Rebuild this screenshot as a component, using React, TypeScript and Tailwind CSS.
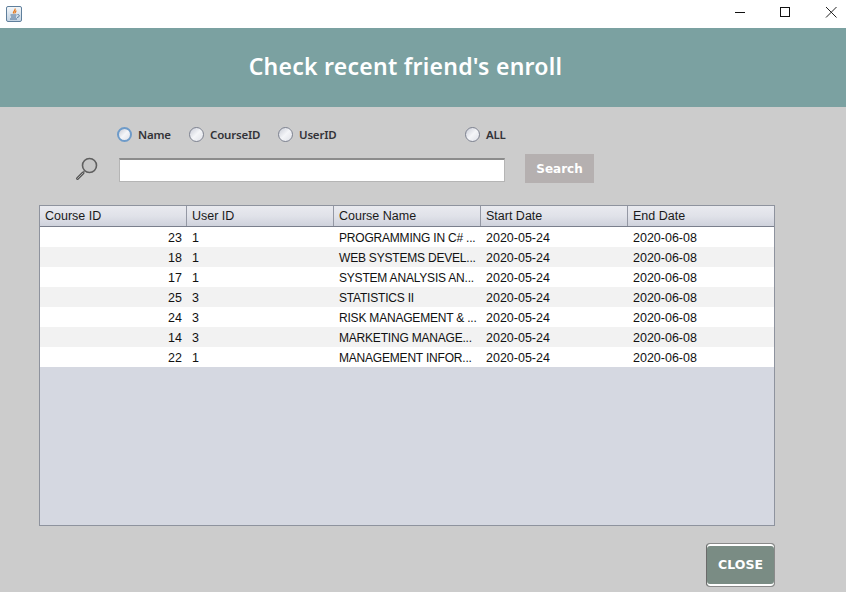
const rows = [
  ["23", "1", "PROGRAMMING IN C# ..."],
  ["18", "1", "WEB SYSTEMS DEVEL..."],
  ["17", "1", "SYSTEM ANALYSIS AN..."],
  ["25", "3", "STATISTICS II"],
  ["24", "3", "RISK MANAGEMENT & ..."],
  ["14", "3", "MARKETING MANAGE..."],
  ["22", "1", "MANAGEMENT INFOR..."],
];
const headers = ["Course ID", "User ID", "Course Name", "Start Date", "End Date"];

function JavaIcon() {
  return (
    <div className="w-[16px] h-[16px] rounded-[2px] border border-[#5f7f9c] bg-gradient-to-b from-[#f4f7fa] to-[#c3d3e2] flex items-center justify-center">
      <svg width="13" height="13" viewBox="0 0 13 13" fill="none">
        <path d="M7 0.5C8 2.5 4.5 3.5 5.5 5.5M8 2.5C8 4 6.7 4.5 7 5.5" stroke="#e8791c" strokeWidth="1.2" />
        <path d="M2.5 7H8.5M3 9H8M2 11H9" stroke="#4c6f94" strokeWidth="1" />
        <path d="M9.5 6.5C12 6.5 12 9 9 9.5" stroke="#4c6f94" strokeWidth="0.9" />
      </svg>
    </div>
  );
}

function Radio({ label, focused, width }: { label: string; focused?: boolean; width: string }) {
  return (
    <div className={`flex items-center gap-[6px] ${width}`}>
      <div className={`w-[15px] h-[15px] rounded-full shrink-0 bg-gradient-to-br from-[#c9ccd6] via-[#f4f5f8] to-[#dfe1e8] ${focused ? "border-2 border-[#6e9bc9]" : "border border-[#7d8290]"}`} />
      <span className="text-[11.5px] font-semibold tracking-[-0.2px] text-[#333338] font-['Noto_Sans','DejaVu_Sans',sans-serif] leading-none">{label}</span>
    </div>
  );
}

export default function App() {
  return (
    <div className="w-[846px] h-[592px] bg-[#cccccc] flex flex-col overflow-hidden font-['Liberation_Sans',Arial,sans-serif]">
      <div className="h-[28px] bg-white flex items-center shrink-0 pl-[6px]">
        <JavaIcon />
        <div className="ml-auto flex items-center">
          <svg width="46" height="28" viewBox="0 0 46 28"><path d="M27 12.5H37" stroke="#111" strokeWidth="1" /></svg>
          <svg width="46" height="28" viewBox="0 0 46 28"><rect x="26.5" y="7.5" width="9" height="9" fill="none" stroke="#111" strokeWidth="1" /></svg>
          <svg width="46" height="28" viewBox="0 0 46 28"><path d="M26 7L36.5 17.5M36.5 7L26 17.5" stroke="#222" strokeWidth="1" /></svg>
        </div>
      </div>

      <div className="h-[79px] bg-[#7ba1a1] flex items-center justify-center shrink-0 pb-[2px]">
        <h1 className="text-[23px] font-semibold text-white font-['Noto_Sans',sans-serif] ml-[-35px] tracking-[0.25px]">Check recent friend's enroll</h1>
      </div>

      <div className="flex-1 flex flex-col pl-[39px] pr-[71px]">
        <div className="flex items-center pl-[78px] pt-[20px] h-[35px]">
          <Radio label="Name" focused width="w-[72px]" />
          <Radio label="CourseID" width="w-[89px]" />
          <Radio label="UserID" width="w-[187px]" />
          <Radio label="ALL" width="w-[60px]" />
        </div>

        <div className="flex items-start mt-[12px] h-[29px]">
          <div className="w-[80px] pl-[35px] pt-[2px] flex items-center">
            <svg width="26" height="26" viewBox="0 0 26 26" fill="none">
              <circle cx="15.5" cy="9.5" r="7" fill="#c6c6c6" stroke="#5f5f5f" strokeWidth="1.6" />
              <path d="M10.5 15L9 16.5" stroke="#777" strokeWidth="1.6" />
              <path d="M9 17L3.5 22.5" stroke="#555" strokeWidth="3" strokeLinecap="round" />
              <path d="M9 17L3.5 22.5" stroke="#a8a8a8" strokeWidth="1" strokeLinecap="round" />
            </svg>
          </div>
          <div className="w-[386px] h-[24px] mt-[4px] bg-white border border-[#b5b5b5] border-t-2 border-t-[#8c8c8c]" />
          <button className="ml-[20px] w-[69px] h-[29px] bg-[#b5b0b0] text-white text-[12px] font-bold font-['DejaVu_Sans',sans-serif]">Search</button>
        </div>

        <div className="mt-[22px] w-[736px] h-[321px] border border-[#8e939e] bg-[#d5d8e1] flex flex-col overflow-hidden">
          <div className="flex h-[21px] border-b border-[#7a7f8c] bg-gradient-to-b from-[#e9eaef] via-[#e0e2e9] to-[#cfd2dc] shrink-0">
            {headers.map((h, i) => (
              <div key={h} className={`w-[147px] shrink-0 pl-[5px] text-[12.5px] leading-[20px] text-[#1a1a1a] ${i < 4 ? "border-r border-[#9498a4]" : ""}`}>{h}</div>
            ))}
          </div>
          {rows.map((r, i) => (
            <div key={r[0]} className={`flex h-[20px] text-[12.5px] leading-[22px] text-[#111111] ${i % 2 ? "bg-[#f2f2f2]" : "bg-white"}`}>
              <div className="w-[147px] shrink-0 text-right pr-[5px]">{r[0]}</div>
              <div className="w-[147px] shrink-0 pl-[5px]">{r[1]}</div>
              <div className="w-[147px] shrink-0 pl-[5px] whitespace-nowrap text-[12px] tracking-[-0.2px]">{r[2]}</div>
              <div className="w-[147px] shrink-0 pl-[5px]">2020-05-24</div>
              <div className="w-[147px] shrink-0 pl-[5px]">2020-06-08</div>
            </div>
          ))}
        </div>

        <div className="flex justify-end mt-[17px]">
          <button className="w-[69px] h-[44px] rounded-[4px] bg-[#7a8c84] border border-[#8a8a8a] border-l-[#6a6a6a] shadow-[inset_0_2px_0_#ffffff,inset_0_-2px_0_#ffffff] text-white text-[12.5px] font-bold font-['DejaVu_Sans',sans-serif]">CLOSE</button>
        </div>
      </div>
    </div>
  );
}
